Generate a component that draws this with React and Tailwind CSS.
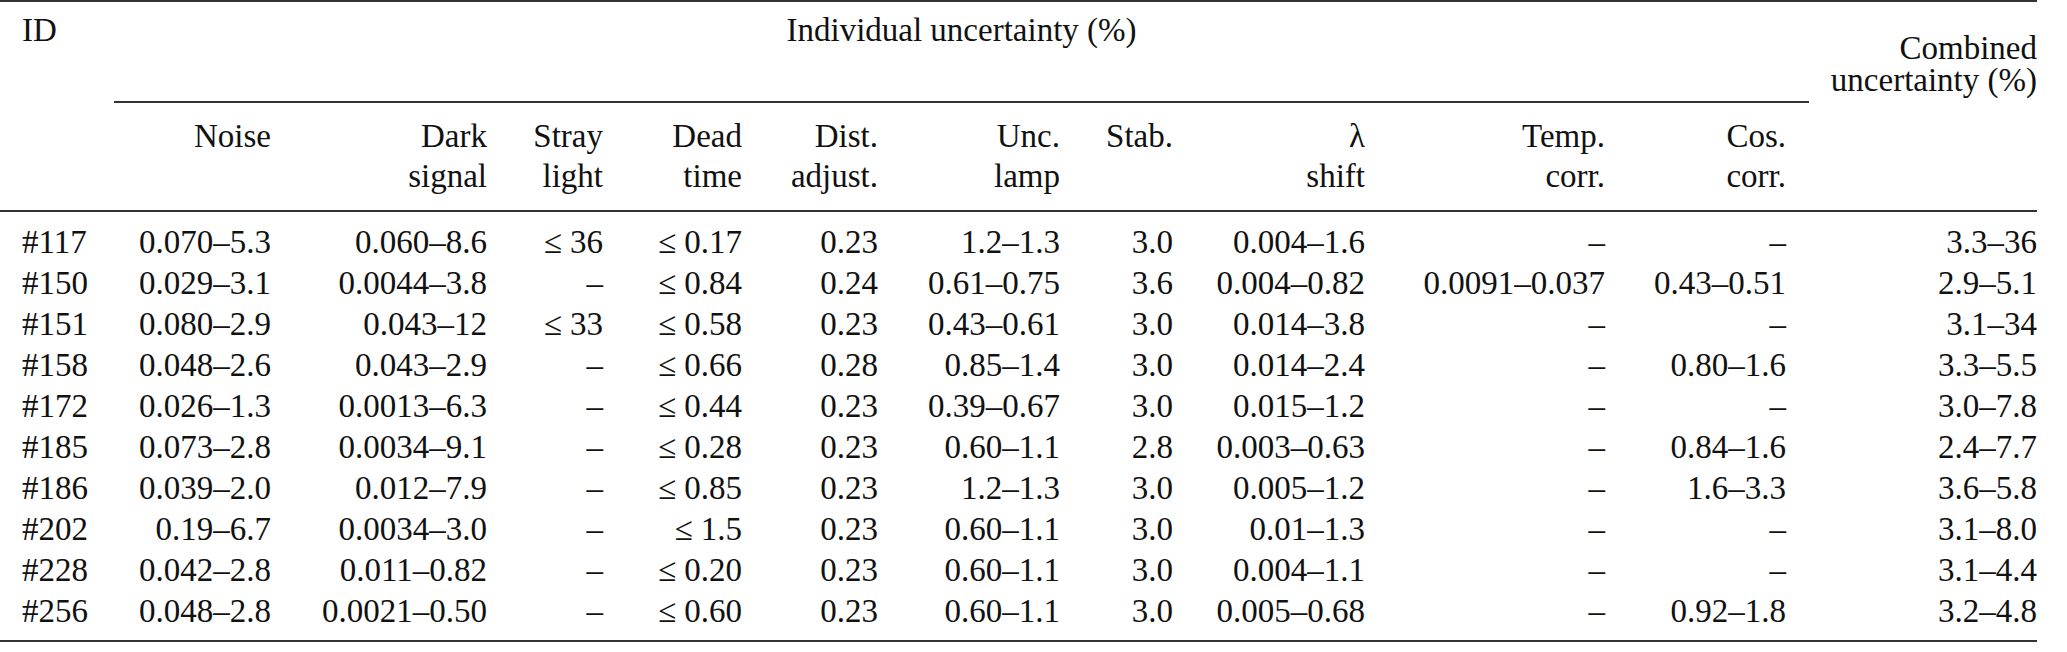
import React from 'react'

const grid =
  'grid grid-cols-[114px_157px_216px_116px_139px_136px_182px_113px_192px_240px_181px_23px_228px]'

const subHeads = [
  ['Noise', ''],
  ['Dark', 'signal'],
  ['Stray', 'light'],
  ['Dead', 'time'],
  ['Dist.', 'adjust.'],
  ['Unc.', 'lamp'],
  ['Stab.', ''],
  ['λ', 'shift'],
  ['Temp.', 'corr.'],
  ['Cos.', 'corr.'],
]

const rows = [
  ['#117', '0.070–5.3', '0.060–8.6', '≤ 36', '≤ 0.17', '0.23', '1.2–1.3', '3.0', '0.004–1.6', '–', '–', '3.3–36'],
  ['#150', '0.029–3.1', '0.0044–3.8', '–', '≤ 0.84', '0.24', '0.61–0.75', '3.6', '0.004–0.82', '0.0091–0.037', '0.43–0.51', '2.9–5.1'],
  ['#151', '0.080–2.9', '0.043–12', '≤ 33', '≤ 0.58', '0.23', '0.43–0.61', '3.0', '0.014–3.8', '–', '–', '3.1–34'],
  ['#158', '0.048–2.6', '0.043–2.9', '–', '≤ 0.66', '0.28', '0.85–1.4', '3.0', '0.014–2.4', '–', '0.80–1.6', '3.3–5.5'],
  ['#172', '0.026–1.3', '0.0013–6.3', '–', '≤ 0.44', '0.23', '0.39–0.67', '3.0', '0.015–1.2', '–', '–', '3.0–7.8'],
  ['#185', '0.073–2.8', '0.0034–9.1', '–', '≤ 0.28', '0.23', '0.60–1.1', '2.8', '0.003–0.63', '–', '0.84–1.6', '2.4–7.7'],
  ['#186', '0.039–2.0', '0.012–7.9', '–', '≤ 0.85', '0.23', '1.2–1.3', '3.0', '0.005–1.2', '–', '1.6–3.3', '3.6–5.8'],
  ['#202', '0.19–6.7', '0.0034–3.0', '–', '≤ 1.5', '0.23', '0.60–1.1', '3.0', '0.01–1.3', '–', '–', '3.1–8.0'],
  ['#228', '0.042–2.8', '0.011–0.82', '–', '≤ 0.20', '0.23', '0.60–1.1', '3.0', '0.004–1.1', '–', '–', '3.1–4.4'],
  ['#256', '0.048–2.8', '0.0021–0.50', '–', '≤ 0.60', '0.23', '0.60–1.1', '3.0', '0.005–0.68', '–', '0.92–1.8', '3.2–4.8'],
]

export default function App() {
  return (
    <div className="w-[2067px] h-[652px] bg-white pr-[30px] font-['Liberation_Serif',serif] text-[33px] text-[#111]">
      {/* header */}
      <div className={`${grid} border-y-2 border-[#333]`}>
        <div className="col-start-1 row-start-1 pl-[22px] pt-[8px] leading-[41px]">ID</div>
        <div className="col-start-2 col-span-11 row-start-1 h-[101px] border-b-2 border-[#333] pt-[8px] text-center leading-[41px]">
          Individual uncertainty (%)
        </div>
        <div className="col-start-13 row-start-1 row-span-2 pt-[30px] text-right leading-[32px]">
          Combined
          <br />
          uncertainty (%)
        </div>
        {subHeads.map(([a, b], i) => (
          <div key={a} className="row-start-2 pt-[13px] pb-[14px] text-right leading-[40px]" style={{ gridColumnStart: i + 2 }}>
            {a}
            {b && <br />}
            {b}
          </div>
        ))}
      </div>

      {/* body */}
      <div className={`${grid} border-b-2 border-[#333] pt-[10px] pb-[8px] leading-[41px]`}>
        {rows.map((r) => (
          <React.Fragment key={r[0]}>
            <div className="pl-[22px]">{r[0]}</div>
            {r.slice(1, 11).map((v, i) => (
              <div key={i} className="text-right whitespace-nowrap">
                {v}
              </div>
            ))}
            <div />
            <div className="text-right">{r[11]}</div>
          </React.Fragment>
        ))}
      </div>
    </div>
  )
}
